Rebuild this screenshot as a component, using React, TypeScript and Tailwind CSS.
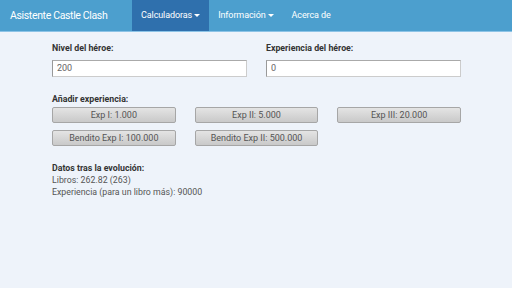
export default function App() {
  const buttons = [
    "Exp I: 1.000",
    "Exp II: 5.000",
    "Exp III: 20.000",
    "Bendito Exp I: 100.000",
    "Bendito Exp II: 500.000",
  ];

  return (
    <div className="h-[288px] w-[512px] bg-[#eef3fa] font-['Roboto',sans-serif] text-[#333]">
      <nav className="flex h-[32px] items-stretch border-b border-[#8cc3e6] bg-[#4c9fce] text-white">
        <div className="flex w-[132px] items-center pl-[10px] text-[10.5px] tracking-[-0.35px]">Asistente Castle Clash</div>
        <div className="flex items-center bg-[#2f70ad] px-[9px] text-[9px] tracking-[-0.1px]">
          Calculadoras
          <span className="ml-[2px] inline-block border-x-[3px] border-t-[3px] border-x-transparent border-t-white" />
        </div>
        <div className="flex items-center px-[9px] text-[9px] tracking-[-0.1px]">
          Información
          <span className="ml-[2px] inline-block border-x-[3px] border-t-[3px] border-x-transparent border-t-white" />
        </div>
        <div className="flex items-center px-[9px] text-[9px] tracking-[-0.1px]">Acerca de</div>
      </nav>

      <main className="w-[461px] pl-[52px] pt-[10px]">
        <div className="grid grid-cols-2 gap-x-[19px]">
          <div>
            <label className="block text-[8.8px] font-bold leading-[12px]">Nivel del héroe:</label>
            <input
              readOnly
              value="200"
              className="mt-[1px] h-[17px] w-full border border-[#ccc] border-l-[#999] border-t-[#aaa] bg-white px-[4px] text-[9px] text-[#666] outline-none"
            />
          </div>
          <div>
            <label className="block text-[8.8px] font-bold leading-[12px]">Experiencia del héroe:</label>
            <input
              readOnly
              value="0"
              className="mt-[1px] h-[17px] w-full border border-[#ccc] border-l-[#999] border-t-[#aaa] bg-white px-[4px] text-[9px] text-[#666] outline-none"
            />
          </div>
        </div>

        <div className="mt-[15px] text-[8.8px] font-bold leading-[12px]">Añadir experiencia:</div>
        <div className="mt-[2px] grid grid-cols-3 gap-x-[19px] gap-y-[7px]">
          {buttons.map((b) => (
            <button
              key={b}
              className="h-[16px] rounded-[2px] border border-[#a6a6a6] bg-gradient-to-b from-[#e4e4e4] to-[#c9c9c9] text-[9px] leading-none text-[#555]"
            >
              {b}
            </button>
          ))}
        </div>

        <div className="mt-[16px] text-[8.8px] leading-[12px]">
          <div className="font-bold">Datos tras la evolución:</div>
          <div className="text-[#555]">Libros: 262.82 (263)</div>
          <div className="text-[#555]">Experiencia (para un libro más): 90000</div>
        </div>
      </main>
    </div>
  );
}
